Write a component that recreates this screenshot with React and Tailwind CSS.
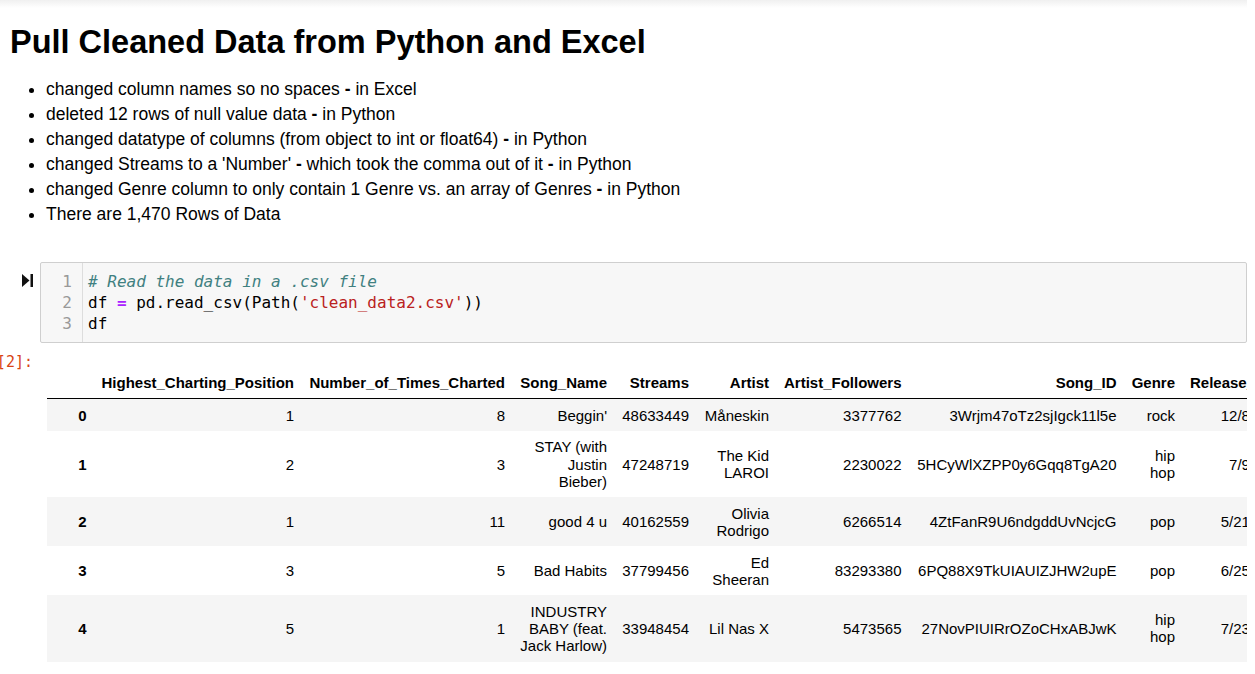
import React from 'react';

const notes = [
  ['changed column names so no spaces', 'in Excel'],
  ['deleted 12 rows of null value data', 'in Python'],
  ['changed datatype of columns (from object to int or float64)', 'in Python'],
  ["changed Streams to a 'Number'", 'which took the comma out of it', 'in Python'],
  ['changed Genre column to only contain 1 Genre vs. an array of Genres', 'in Python'],
];

const columns = [
  { name: '', w: 'w-[47px]' },
  { name: 'Highest_Charting_Position', w: 'w-[207.5px]' },
  { name: 'Number_of_Times_Charted', w: 'w-[211px]' },
  { name: 'Song_Name', w: 'w-[102px]' },
  { name: 'Streams', w: 'w-[82px]' },
  { name: 'Artist', w: 'w-[80px]' },
  { name: 'Artist_Followers', w: 'w-[132.5px]' },
  { name: 'Song_ID', w: 'w-[215px]' },
  { name: 'Genre', w: 'w-[58.5px]' },
  { name: 'Release_Date', w: 'w-[112.5px]' },
];

const rows = [
  [1, 8, "Beggin'", 48633449, 'Måneskin', 3377762, '3Wrjm47oTz2sjIgck11l5e', 'rock', '12/8/2017'],
  [2, 3, 'STAY (with Justin Bieber)', 47248719, 'The Kid LAROI', 2230022, '5HCyWlXZPP0y6Gqq8TgA20', 'hip hop', '7/9/2021'],
  [1, 11, 'good 4 u', 40162559, 'Olivia Rodrigo', 6266514, '4ZtFanR9U6ndgddUvNcjcG', 'pop', '5/21/2021'],
  [3, 5, 'Bad Habits', 37799456, 'Ed Sheeran', 83293380, '6PQ88X9TkUIAUIZJHW2upE', 'pop', '6/25/2021'],
  [5, 1, 'INDUSTRY BABY (feat. Jack Harlow)', 33948454, 'Lil Nas X', 5473565, '27NovPIUIRrOZoCHxABJwK', 'hip hop', '7/23/2021'],
];

function RunIcon() {
  return (
    <svg width="11" height="13" viewBox="0 0 11 13" fill="#111">
      <path d="M0 0 L7.5 6.5 L0 13 Z" />
      <rect x="8.5" y="0" width="2.5" height="13" />
    </svg>
  );
}

export default function App() {
  return (
    <div className="w-[1255px] h-[674px] overflow-hidden bg-white text-black font-['Liberation_Sans',Arial,sans-serif]">
      <div className="w-[1247px] overflow-hidden">
        <div className="h-2 bg-gradient-to-b from-[#f0f0f0] to-white" />

        <h1 className="mt-[16px] pl-[10px] text-[32.5px] leading-[37px] font-bold">
          Pull Cleaned Data from Python and Excel
        </h1>

        <ul className="mt-[15.5px] pl-[46px] list-disc text-[17.5px] leading-[25px]">
          {notes.map((parts, i) => (
            <li key={i}>
              {parts.map((p, j) => (
                <span key={j}>
                  {j > 0 && <> <b>-</b> </>}
                  {p}
                </span>
              ))}
            </li>
          ))}
          <li>There are 1,470 Rows of Data</li>
        </ul>

        {/* code cell */}
        <div className="mt-[35.5px] flex">
          <div className="w-[40px] shrink-0 pl-[22px] pt-[12px]">
            <RunIcon />
          </div>
          <div className="flex-1 flex border border-[#cfcfcf] bg-[#f7f7f7] rounded-[2px] font-['DejaVu_Sans_Mono',monospace] text-[16px] leading-[21px]">
            <div className="w-[42px] shrink-0 border-r border-[#dddddd] py-2 pr-[10px] text-right text-[#999999]">
              <div>1</div>
              <div>2</div>
              <div>3</div>
            </div>
            <div className="py-2 pl-[5px] whitespace-pre">
              <div className="italic text-[#408080]"># Read the data in a .csv file</div>
              <div>
                df <span className="font-bold text-[#aa22ff]">=</span> pd.read_csv(Path(
                <span className="text-[#ba2121]">'clean_data2.csv'</span>))
              </div>
              <div>df</div>
            </div>
          </div>
        </div>

        {/* output */}
        <div className="mt-[9px] flex">
          <div className="w-[33px] shrink-0 flex justify-end overflow-hidden font-['DejaVu_Sans_Mono',monospace] text-[15px] leading-[20px] text-[#d84315] whitespace-nowrap">
            <span>Out[2]:</span>
          </div>
          <div className="ml-[14px] flex-1 min-w-0 overflow-hidden pt-[15px]">
            <table className="table-fixed border-collapse w-[1248px] text-[15px] leading-[17.25px]">
              <colgroup>
                {columns.map((c, i) => (
                  <col key={i} className={c.w} />
                ))}
              </colgroup>
              <thead>
                <tr>
                  {columns.map((c, i) => (
                    <th key={i} className="px-[7.5px] py-[7px] text-right font-bold border-b border-black whitespace-nowrap align-bottom">
                      {c.name}
                    </th>
                  ))}
                </tr>
              </thead>
              <tbody>
                {rows.map((r, i) => (
                  <tr key={i} className={i % 2 === 0 ? 'bg-[#f5f5f5]' : 'bg-white'}>
                    <th className="px-[7.5px] py-[7.25px] text-right font-bold">{i}</th>
                    {r.map((v, j) => (
                      <td key={j} className="px-[7.5px] py-[7.25px] text-right align-middle">
                        {v}
                      </td>
                    ))}
                  </tr>
                ))}
              </tbody>
            </table>
          </div>
        </div>
      </div>
    </div>
  );
}
